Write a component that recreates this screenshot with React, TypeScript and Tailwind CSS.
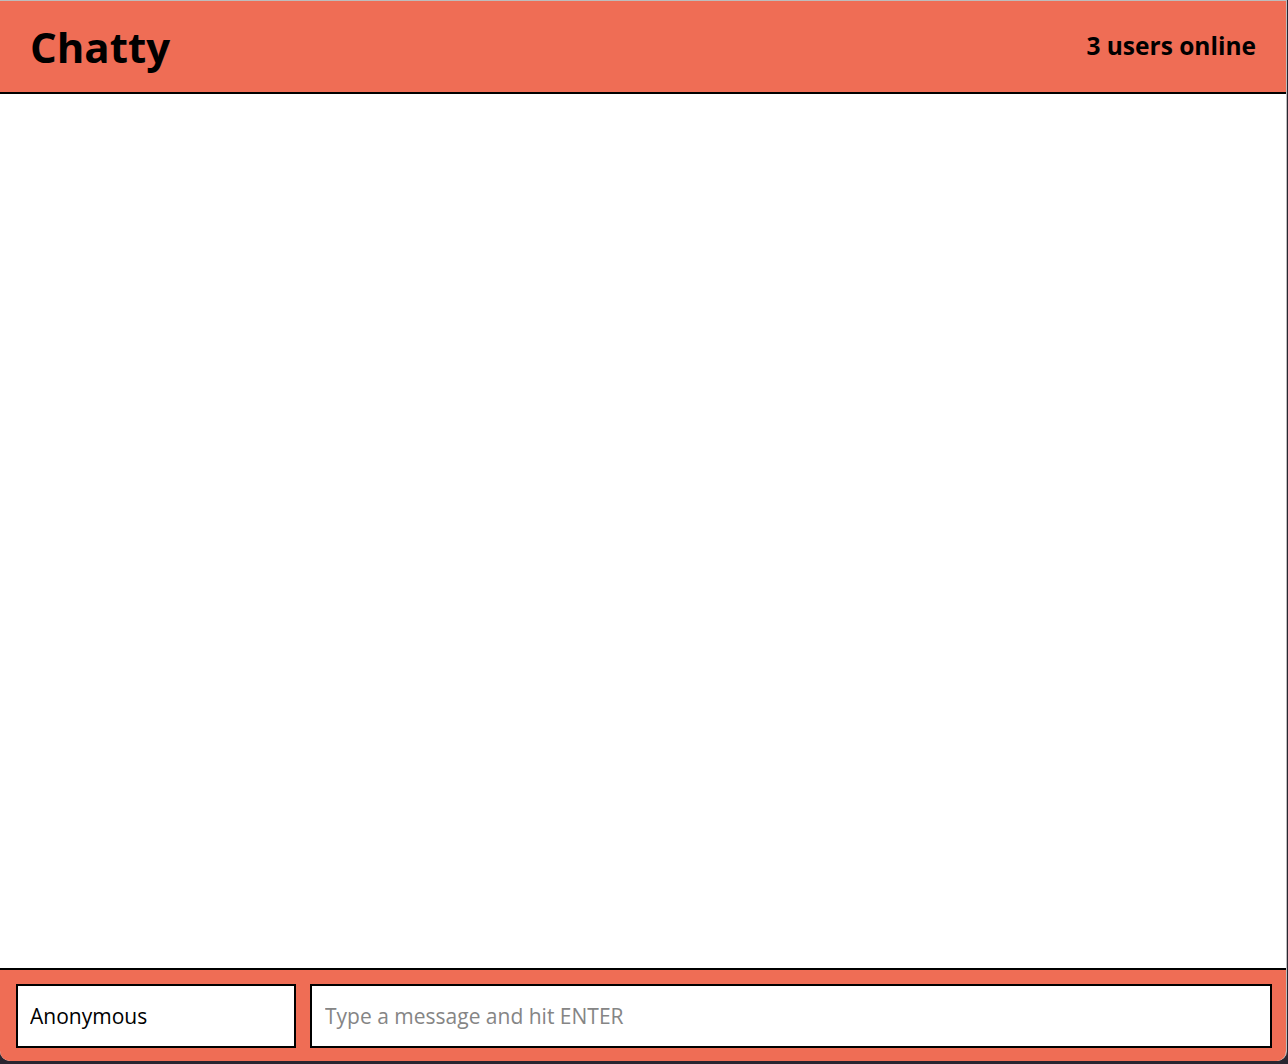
import React, { useState } from "react";

const App: React.FC = () => {
  const [name, setName] = useState("Anonymous");
  const [message, setMessage] = useState("");

  return (
    <div className="h-[1064px] w-[1288px] bg-[#2a2530] overflow-hidden">
      <div
        className="flex h-[1061px] w-[1287px] flex-col overflow-hidden rounded-b-[10px] border-r border-t border-[#bdbdbd] bg-white"
        style={{ fontFamily: '"Open Sans", "Liberation Sans", sans-serif' }}
      >
        <nav className="flex h-[93px] shrink-0 items-center justify-between border-b-2 border-black bg-[#ef6d55] pl-[30px] pr-[30px]">
          <h1 className="text-[42px] font-bold leading-none text-black">Chatty</h1>
          <span className="text-[24.5px] font-bold text-black">3 users online</span>
        </nav>

        <main className="flex-1" />

        <footer className="flex h-[93px] shrink-0 gap-[14px] border-t-2 border-black bg-[#ef6d55] pb-[13px] pl-4 pr-[14px] pt-[14px]">
          <input
            value={name}
            onChange={(e) => setName(e.target.value)}
            className="h-16 w-[280px] border-2 border-black bg-white px-3 text-[21px] text-black outline-none"
          />
          <input
            value={message}
            onChange={(e) => setMessage(e.target.value)}
            placeholder="Type a message and hit ENTER"
            className="h-16 flex-1 border-2 border-black bg-white px-[13px] text-[21px] text-black outline-none placeholder:text-[#858585]"
          />
        </footer>
      </div>
    </div>
  );
};

export default App;
